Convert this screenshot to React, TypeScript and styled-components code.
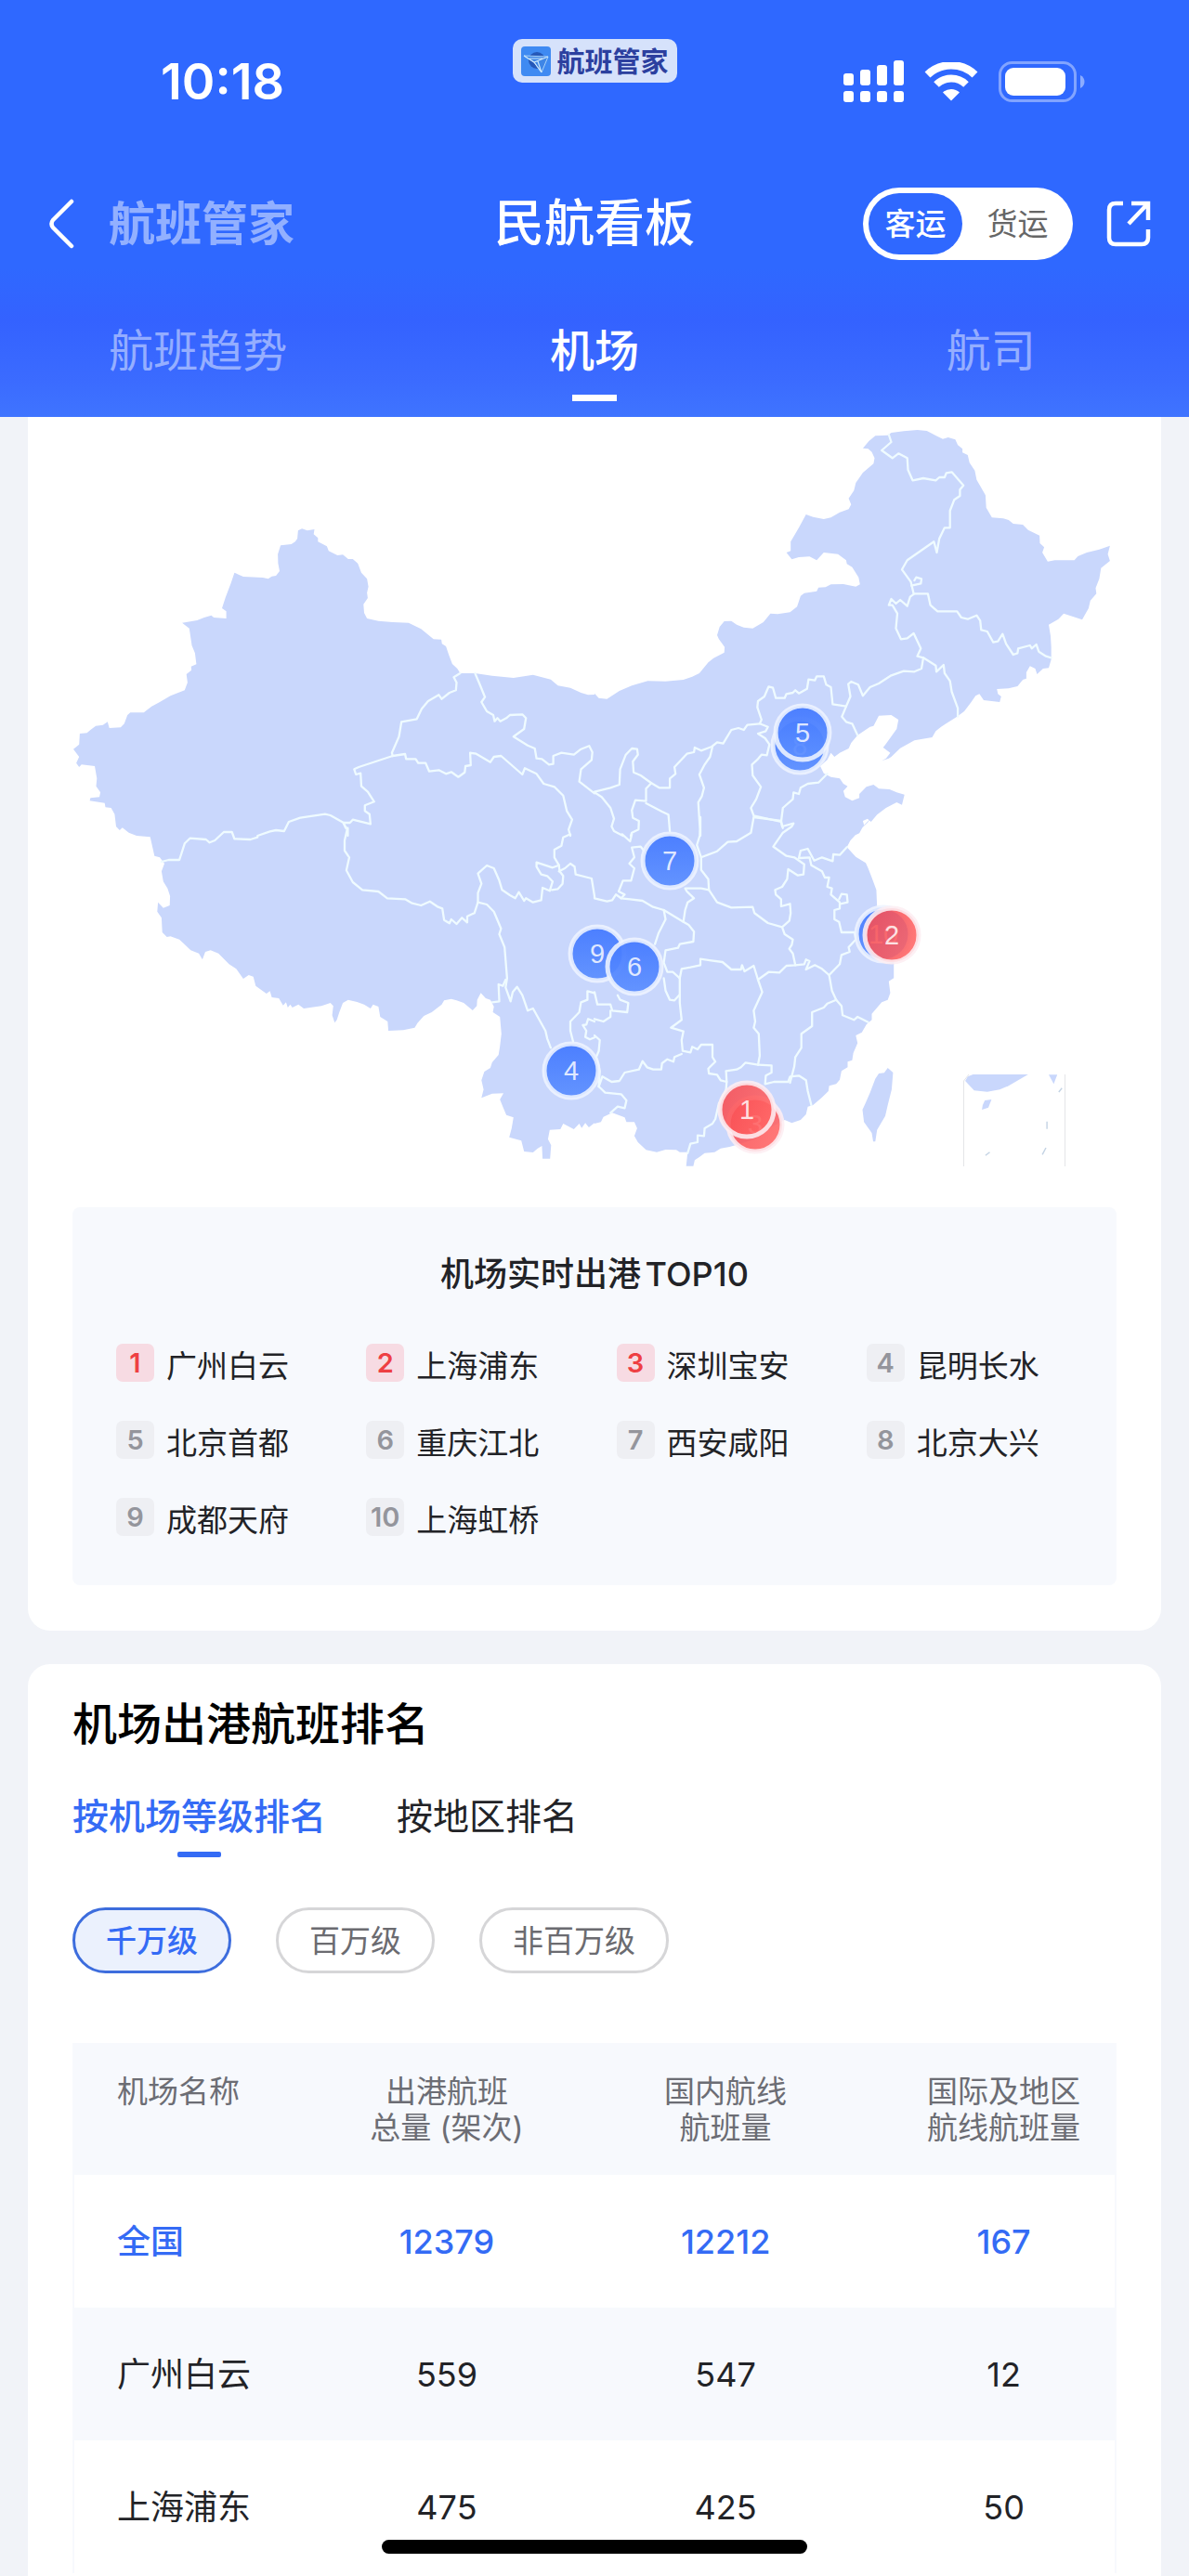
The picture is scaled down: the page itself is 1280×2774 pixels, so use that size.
import React, { useState } from 'react';
import styled, { createGlobalStyle } from 'styled-components';

const GlobalStyle = createGlobalStyle`
  *, *::before, *::after { box-sizing: border-box; }
  body {
    margin: 0;
    background: #f1f3f8;
    color: #222327;
    font-family: Inter, "Noto Sans CJK SC", sans-serif;
    text-autospace: normal;
  }
  button { font: inherit; color: inherit; background: none; border: 0; padding: 0; cursor: pointer; }
  h1, h2, h3, ol { margin: 0; padding: 0; }
`;

/* ---------- shell ---------- */

const Screen = styled.div`
  display: flex;
  flex-direction: column;
  height: 100vh;
  overflow: hidden;
`;

const Header = styled.header`
  flex: none;
  color: #fff;
  background: linear-gradient(#2f68ff 0, #2f68ff 290px, #3462ff 345px, #3b6bff 410px, #3f74ff 100%);
`;

const StatusBar = styled.div`
  display: grid;
  grid-template-columns: 1fr auto 1fr;
  align-items: center;
  height: 134px;
  padding: 42px 112px 0;
`;

const Clock = styled.time`
  padding-left: 61px;
  font-size: 54px;
  font-weight: 600;
  line-height: 64px;
`;

const BrandChip = styled.div`
  align-self: start;
  display: flex;
  align-items: center;
  gap: 7px;
  height: 47px;
  padding: 0 9px;
  border-radius: 10px;
  background: #d6e2fb;
  color: #2c409f;
  font-size: 30px;
  font-weight: 700;
  line-height: 40px;
`;

const StatusIcons = styled.div`
  display: flex;
  align-items: center;
  justify-content: flex-end;
  gap: 22px;
`;

const NavBar = styled.nav`
  display: grid;
  grid-template-columns: 1fr auto 1fr;
  align-items: center;
  height: 78px;
  margin-top: 68px;
  padding: 0 41px;
`;

const NavSide = styled.div<{ $end?: boolean }>`
  display: flex;
  align-items: center;
  justify-content: ${(p) => (p.$end ? 'flex-end' : 'flex-start')};
  gap: 36px;
`;

const IconButton = styled.button`
  display: flex;
`;

const BackButton = styled(IconButton)`
  padding-left: 12px;
`;

const BrandWord = styled.span`
  font-size: 50px;
  font-weight: 700;
  line-height: 72px;
  color: rgba(255, 255, 255, 0.48);
`;

const Title = styled.h1`
  font-size: 54px;
  font-weight: 500;
  line-height: 76px;
`;

const Segmented = styled.div`
  display: flex;
  height: 78px;
  padding: 6px 0 6px 6px;
  border-radius: 39px;
  background: #fff;
`;

const Segment = styled.button<{ $active: boolean }>`
  width: ${(p) => (p.$active ? '101px' : '119px')};
  border-radius: 33px;
  font-size: 33px;
  font-weight: ${(p) => (p.$active ? 500 : 400)};
  line-height: 48px;
  color: ${(p) => (p.$active ? '#fff' : '#666')};
  background: ${(p) => (p.$active ? '#2f68ff' : 'transparent')};
`;

const MainTabs = styled.div`
  display: grid;
  grid-template-columns: repeat(3, 1fr);
  margin-top: 64px;
`;

const MainTab = styled.button<{ $active: boolean }>`
  display: flex;
  flex-direction: column;
  align-items: center;
  padding-bottom: 17px;
  font-size: 48px;
  font-weight: ${(p) => (p.$active ? 500 : 400)};
  line-height: 68px;
  color: ${(p) => (p.$active ? '#fff' : 'rgba(255, 255, 255, 0.48)')};

  &::after {
    content: '';
    width: 48px;
    height: 7px;
    margin-top: 13px;
    background: ${(p) => (p.$active ? '#fff' : 'transparent')};
  }
`;

const Content = styled.main`
  flex: 1;
  min-height: 0;
  overflow-y: auto;
  scrollbar-width: none;
  padding: 0 30px;
`;

const HomeIndicator = styled.div`
  position: fixed;
  left: 50%;
  bottom: 24px;
  width: 458px;
  height: 15px;
  margin-left: -229px;
  border-radius: 8px;
  background: #000;
`;

/* ---------- map card ---------- */

const MapCard = styled.section`
  padding-bottom: 49px;
  border-radius: 0 0 24px 24px;
  background: #fff;
`;

const MapSvg = styled.svg`
  display: block;
  width: 100%;
  height: auto;
`;

const TopPanel = styled.div`
  margin: 44px 48px 0;
  padding: 47px 0 53px 47px;
  border-radius: 8px;
  background: #f7f9fd;
`;

const TopTitle = styled.h2`
  padding-right: 47px;
  text-align: center;
  font-size: 36px;
  font-weight: 500;
  line-height: 50px;
`;

const TopList = styled.ol`
  display: grid;
  grid-template-columns: repeat(4, 1fr);
  row-gap: 42px;
  margin-top: 50px;
  list-style: none;
`;

const TopItem = styled.li`
  display: flex;
  align-items: flex-start;
  gap: 13px;
  height: 41px;
  font-size: 33px;
  line-height: 48px;
  white-space: nowrap;
`;

const Rank = styled.span<{ $hot: boolean }>`
  flex: none;
  width: 41px;
  height: 41px;
  border-radius: 7px;
  text-align: center;
  font-size: 29px;
  font-weight: 600;
  line-height: 41px;
  color: ${(p) => (p.$hot ? '#ee3f43' : '#94959c')};
  background: ${(p) => (p.$hot ? '#f7dbe3' : '#eeeff3')};
`;

/* ---------- ranking card ---------- */

const RankCard = styled.section`
  margin-top: 36px;
  padding: 32px 48px 48px;
  border-radius: 24px;
  background: #fff;
`;

const RankTitle = styled.h2`
  font-size: 48px;
  font-weight: 500;
  line-height: 66px;
  color: #000;
`;

const SubTabs = styled.div`
  display: flex;
  gap: 76px;
  margin-top: 38px;
`;

const SubTab = styled.button<{ $active: boolean }>`
  display: flex;
  flex-direction: column;
  align-items: center;
  font-size: 39px;
  font-weight: ${(p) => (p.$active ? 500 : 400)};
  line-height: 55px;
  color: ${(p) => (p.$active ? '#346bf5' : '#222327')};

  &::after {
    content: '';
    width: 47px;
    height: 6px;
    margin-top: 11px;
    border-radius: 2px;
    background: ${(p) => (p.$active ? '#346bf5' : 'transparent')};
  }
`;

const Pills = styled.div`
  display: flex;
  gap: 48px;
  margin-top: 54px;
`;

const Pill = styled.button<{ $active: boolean }>`
  height: 71px;
  padding: 0 33px;
  border: 3px solid ${(p) => (p.$active ? '#3d6ddd' : '#d6d6d8')};
  border-radius: 36px;
  font-size: 33px;
  line-height: 48px;
  font-weight: ${(p) => (p.$active ? 500 : 400)};
  color: ${(p) => (p.$active ? '#346bf5' : '#6b6b70')};
  background: ${(p) => (p.$active ? '#ebf1fd' : '#fff')};
`;

const Table = styled.table`
  width: 100%;
  margin-top: 75px;
  table-layout: fixed;
  border-spacing: 0;
  border: 2px solid #f7f9fd;
  border-width: 0 2px;
  font-size: 36px;
`;

const Col = styled.col<{ $share: number }>`
  width: ${(p) => p.$share}%;
`;

const Th = styled.th`
  height: 142px;
  padding: 33px 0 0;
  vertical-align: top;
  font-size: 33px;
  font-weight: 400;
  line-height: 39px;
  color: #6c6d74;
  background: #f7f9fd;

  &:first-child { padding-left: 46px; text-align: left; }
  &:last-child { padding-left: 30px; }
`;

const Row = styled.tr<{ $total?: boolean }>`
  color: ${(p) => (p.$total ? '#346bf5' : '#222327')};
  font-weight: ${(p) => (p.$total ? 500 : 400)};

  &:nth-child(even) { background: #f7f9fd; }
`;

const Td = styled.td`
  height: 143px;
  padding: 0;
  text-align: center;
  line-height: 52px;

  &:first-child { padding-left: 46px; text-align: left; }
  &:last-child { padding-left: 30px; }
`;

/* ---------- map data ---------- */

/* The map is digitised in four tiles; each has its own origin and a shared grid step. */
type Tile = 'nw' | 'ne' | 'sw' | 'se';
const TILE_ORIGIN: Record<Tile, [number, number]> = {
  nw: [40, 440],
  ne: [640, 440],
  sw: [40, 880],
  se: [640, 880],
};
const STEP_X = 2.6133;
const STEP_Y = 3;

const toPath = (spec: string) => {
  let tile: Tile = 'nw';
  const out: string[] = [];
  spec.trim().split(/\s+/).forEach((token) => {
    if (token in TILE_ORIGIN) {
      tile = token as Tile;
      return;
    }
    const [x, y] = token.split(',').map(Number);
    const [ox, oy] = TILE_ORIGIN[tile];
    out.push(`${(ox + x / STEP_X).toFixed(1)} ${(oy + y / STEP_Y).toFixed(1)}`);
  });
  return `M${out.join('L')}`;
};

const MAINLAND = `
nw 102,1100 118,1085 120,1050 140,1048 150,1038 165,1025 185,1022 198,1012 203,1032 235,1030 245,1018 254,990 262,982 300,982 322,962
345,948 375,928 415,910 423,885 420,858 434,845 433,833 448,826 444,790 435,765 428,710 408,692 450,684 470,675 490,668 497,675 532,678 532,655
520,645 530,610 545,565 555,530 580,543 635,546 650,550 660,542 672,540 682,525 678,500 677,470 685,442 715,438 726,430 732,420 734,394 745,388 760,394 780,390 778,406 790,418
790,430 815,445 820,460 845,474 860,472 875,486 888,486 902,500 912,530 928,550 932,575 928,595 930,612 918,632 920,660 928,678 960,686 1000,690 1045,692 1080,712 1115,745 1137,746
1139,760 1150,768 1158,795 1168,825 1182,840 1190,855 1232,855 1280,863 1340,870 1395,860 1445,875 1465,895 1500,902 1530,918 1550,925 1568,924
ne 0,920 12,935 35,938 70,912 105,895 150,880 200,881 250,876 275,866 295,855 320,820 335,806 365,788 366,770 350,745 345,732 352,705 365,687 385,686 400,698 420,707 445,710
475,690 495,662 515,664 550,658 570,640 580,605 590,596 625,590 630,578 650,577 665,568 700,567 735,575 747,568 743,545 725,512 710,502 708,490 685,470 645,465 625,490 605,478 575,480
555,487 540,465 552,460 552,430 575,385 595,342 615,350 645,357 665,352 690,335 715,325 722,310 715,290 730,265 735,240 755,207 785,178 788,160 780,140 770,130 755,128 772,105 790,88
825,86 835,78 870,73 908,69 935,72 965,90 980,98 995,93 1015,100 1022,118 1035,130 1035,142 1050,150 1055,175 1070,200 1075,230 1085,250 1100,280 1102,320 1118,352
1150,355 1165,360 1178,372 1205,375 1220,392 1252,410 1253,435 1265,448 1260,465 1275,494 1295,490 1350,490 1360,477 1385,465 1420,455 1450,443 1444,470 1450,492 1425,515 1420,550
1410,580 1412,598 1395,620 1390,645 1372,682 1320,662 1305,680 1278,698 1283,735 1285,770 1285,810 1278,838 1262,840 1245,858 1240,840 1225,832 1215,852 1215,872 1205,876 1190,897 1165,904
1132,906 1135,922 1144,930 1140,948 1095,942 1083,922 1072,928 1060,948 1040,978 1020,995 975,1028 960,1042 950,1062 900,1072 860,1097 835,1125 828,1130 808,1138 820,1130 832,1112 812,1095 820,1083
850,1035 855,1005 835,990 800,992 785,1025 775,1028 740,1055 722,1080 715,1098 690,1112 675,1125 665,1112 655,1135 635,1155 645,1178 665,1190 690,1195 700,1212 712,1220 700,1235 705,1255 725,1267 745,1258
745,1245 765,1222 785,1215 800,1228 830,1230 850,1240 872,1247 865,1280 850,1272 820,1290 795,1312 778,1335 768,1325 755,1332 758,1345 745,1372 730,1380
se 780,0 768,18 752,35 720,75 710,97 735,128 763,148 770,165 780,195 793,235 795,290 840,315 865,350 850,400 842,478 842,520 828,530 832,568 825,590 808,598 780,635 780,655 765,670 752,695
735,705 740,730 728,762 725,785 712,790 712,808 695,820 690,848 680,862 660,868 658,885 640,905 615,930 600,935 595,960 580,978 555,988 535,978 500,1000 450,1040
410,1055 380,1065 355,1070 338,1082 310,1085 295,1098 282,1108 278,1127 258,1127 262,1082 240,1082 230,1075 200,1074 175,1082 145,1075 122,1050 112,1030 120,1005 112,985 90,985 85,970 50,955 25,968 18,985 0,990
sw 1568,988 1552,1002 1542,988 1532,1004 1525,990 1510,1008 1480,990 1472,1008 1442,1010 1437,1040 1446,1060 1443,1103 1422,1103 1420,1062 1408,1070 1395,1083 1370,1080 1362,1045 1328,1034 1335,1005 1340,970 1320,962 1310,935 1302,912 1312,892 1280,893 1250,907
1256,880 1250,850 1258,822 1275,810 1280,792 1298,768 1302,740 1306,700 1302,645 1282,630 1285,612 1275,590 1262,585 1248,568 1238,590 1237,610 1225,624 1200,600 1180,592 1165,587 1145,592 1138,605 1110,630 1088,642 1070,665 1062,680 1030,688 988,690 986,660
965,645 960,612 945,605 938,618 920,605 900,597 875,590 860,600 850,630 843,655 837,664 830,640 833,610 825,600 800,610 750,618 735,605 718,615 712,605 705,615 700,598 692,608 680,585 660,582 655,562 645,570 615,545
608,515 595,510 580,522 560,490 540,475 510,440 488,430 473,435 465,460 455,440 432,430 412,408 400,395 375,385 365,387 352,372 350,325 338,305 340,275 355,293 373,285 374,255 367,230 355,208 350,175 358,150 345,130 330,125 325,100 318,64 280,60 258,50 240,34 232,42 220,28
nw 222,1350 218,1310 208,1290 192,1288 190,1274 148,1267 150,1258 175,1255 178,1240 166,1220 168,1195 162,1155 125,1150 118,1158 110,1145 118,1125`;

const TAIWAN = 'se 825,810 840,825 836,880 825,930 818,965 795,1010 790,1048 784,1048 780,1020 758,985 754,945 762,925 775,890 790,845 800,828 815,826';

const BORDERS = [
  'nw 1190,855 1172,868 1180,885 1178,910 1160,918 1138,938 1130,925 1100,945 1082,970 1068,1003 1025,1012 1018,1060 998,1112 1000,1122',
  'nw 1232,855 1245,890 1260,932 1250,948 1265,978 1283,990 1287,1010 1295,1000 1303,1010 1320,1000 1330,990 1365,988 1375,1000 1370,1035 1340,1060 1380,1088 1400,1098 1405,1130 1420,1132 1440,1150 1452,1148 1452,1122 1475,1112 1510,1118 1530,1100 1553,1090 1562,1110 1560,1135 1530,1165 1525,1205 1568,1243 ne 0,1240 20,1255 45,1290 55,1325 48,1350 55,1365 80,1380 se 78,55 100,78 105,55',
  'nw 1000,1122 905,1158 892,1165 897,1182 910,1178 912,1220 930,1238 948,1270 922,1282 922,1300 935,1310 938,1342 888,1328 880,1338 862,1338 825,1314 810,1310 740,1322 708,1335 695,1365 672,1362 655,1366 620,1380 sw 620,65 600,72 555,70 548,48 525,48 500,75 485,82 475,72 430,68 415,85 400,138 370,138 350,144',
  'nw 1000,1122 1035,1116 1038,1132 1065,1132 1072,1145 1093,1145 1103,1172 1130,1168 1150,1180 1165,1174 1185,1190 1203,1175 1205,1155 1220,1152 1218,1112 1235,1115 1275,1142 1285,1125 1305,1122 1365,1182 1372,1162 1405,1180 1425,1212 1455,1222 1480,1250 1490,1300 1505,1328 1495,1360 1500,1380 sw 1500,55 1480,65 1475,92 1455,105 1455,130 1468,155 1450,163 1405,146 1405,160 1418,185 1435,190 1450,208 1442,238 1422,228 1418,268 1395,275 1375,262 1370,270 1355,242 1345,262 1330,252 1308,235 1300,205 1285,165 1265,156 1240,182 1250,215 1240,245 1240,275 1230,310 1210,320 1210,340 1195,325 1180,345 1165,330 1160,343 1145,332 1140,295 1128,290 1105,272 1080,285 1055,278 1035,265 985,262 960,240 915,235 888,210 870,172 878,130 865,108 865,75 872,40 862,20',
  'nw 862,1338 868,1355 874,1355 874,1380',
  'sw 1240,275 1265,282 1285,305 1305,360 1300,378 1315,420 1322,520 1318,550 1332,595 1338,565 1350,548 1365,575 1380,625 1395,618 1430,690 1435,715 1445,745',
  'sw 1318,525 1310,545 1298,540 1300,595 1280,598',
  'sw 1468,155 1470,175 1480,190 1478,215 1465,232 1448,235',
  'sw 1468,175 1485,165 1500,150 1512,160 1515,185 1560,198 1568,255 se 0,262 35,272 50,268 60,250 75,262 100,265 135,270 165,290 195,300 200,330 180,375 170,410',
  'se 195,300 250,338 265,348 280,370 278,402 240,410 235,422 200,430 195,470 205,500 220,500 240,520',
  'se 75,262 85,250 68,240 80,205 103,205 112,165 98,150 112,130 105,98 130,95 142,112',
  'ne 0,1238 45,1225 70,1215 72,1165 88,1118 105,1098 120,1100 122,1118 108,1140 110,1175 130,1185 160,1210 145,1228 145,1268 115,1265 105,1298 108,1322 125,1332 124,1360 105,1370 102,1380',
  'ne 145,1275 190,1302 208,1312 212,1365',
  'ne 160,1210 182,1225 212,1225 212,1195 228,1180 225,1158 260,1115 280,1110 282,1095 300,1105 330,1092 345,1078 362,1082 385,1038 405,1032 420,1038 430,1022 465,1018 488,1028 482,1042 460,1050 480,1065 492,1085 485,1120 470,1118 460,1132 443,1150 445,1185 468,1222 455,1262 440,1290 448,1315 525,1335 530,1355',
  'ne 332,1092 325,1125 310,1150 295,1182 308,1225 302,1252 292,1272 298,1380 se 298,0 296,60 288,90 300,130 345,110 375,80 400,78 440,50 448,0 500,8 525,12 528,30 560,20 555,30 530,50 503,95 540,125 562,130 590,152 588,185 572,188 545,168 542,200 528,225 508,235 510,250 525,265 525,288 550,280 552,310 548,335 528,355',
  'ne 465,1018 470,1005 458,965 460,945 478,930 490,898 502,902 510,935 535,935 540,922 558,918 565,910 575,920 598,905 602,875 620,878 625,865 645,865 652,892 665,900 670,955 708,962 696,995 708,1012 725,1018 740,1055',
  'ne 708,962 720,930 714,890 722,882 742,892 755,928 775,900 800,888 835,862 870,848 900,850 920,840 925,805 908,800 918,775 898,726 880,742 862,745 848,710 852,662 838,635 828,635 835,615 848,630 860,618 880,638 888,608 900,598 938,598 945,635 965,655 1020,655 1032,675 1050,680 1075,668 1085,685 1088,715 1105,720 1122,755 1135,752 1148,728 1158,760 1178,795 1190,790 1192,775 1225,765 1230,775 1243,762 1250,785 1270,800 1285,805',
  'ne 898,598 890,560 865,520 880,490 955,430 963,465 970,420 985,385 1000,385 1000,330 1012,295 1028,282 1028,262 1038,248 1005,205 990,208 985,222 970,222 960,232 925,225 895,232 882,198 880,160 855,145 838,160 808,135 835,108 828,84',
  'ne 892,572 918,565 920,550 905,545 900,555',
  'ne 925,805 960,830 962,850 982,828 985,855 1000,880 1005,915 1022,968 1022,995',
  'ne 525,1335 530,1290 558,1262 560,1240 575,1245 580,1225 600,1212 630,1208 655,1180',
  'se 575,132 580,108 600,102 618,140 640,130 670,142 672,120 690,122 710,97',
  'se 578,132 605,130 610,155 640,175 648,195 660,195 655,225 668,230 665,250 690,275 690,295 675,300 675,330 688,338 695,372 732,372 735,395 715,420 718,435 695,445 690,475 660,510 668,560 680,590 695,610 698,640 730,655 740,645 770,662',
  'se 688,265 695,248 710,250 712,275 692,280',
  'se 300,130 300,170 320,200 322,235 345,275 385,292 445,290 450,310 488,342 528,355 535,378 558,395 555,412 548,425 558,440 565,478',
  'se 322,235 300,230 255,230 260,240 280,262 262,275 255,300 250,338',
  'se 240,520 245,490 270,485 298,478 298,458 360,468 385,492 412,492 415,478 422,498 448,480 460,525 490,500 520,502 540,480 565,478 590,475 595,460 605,465 595,492 620,478 640,490 660,510',
  'se 460,525 472,565 448,625 452,660 448,680 462,700 465,770 460,800 425,793 412,808 400,815 370,820 372,855 355,850 345,832 322,828 320,812 340,790 332,775 332,735 300,735 290,750 275,742 270,760 248,755 245,720 250,692 215,680 245,655 240,600 240,520',
  'se 195,520 200,560 212,590 225,592 238,575',
  'se 680,590 655,602 645,615 612,630 612,675 582,700 582,745 565,775 562,805 550,858',
  'se 460,800 498,802 498,825 482,835 480,862 505,855 545,855 550,838 575,835 595,850 600,885 610,930',
  'se 245,765 225,775 222,790 205,782 190,795 188,815 165,815 148,808 135,788 125,815 85,825 70,852 48,855 22,838 12,870',
  'se 12,870 30,890 75,895 90,915 85,940 65,935 45,955',
  'se 372,855 370,880 350,925 340,975 332,990 310,1005 308,1030 290,1028 290,1050 270,1055 262,1085',
  'sw 1508,725 1500,690 1500,660 1525,630 1530,598 1548,590 1548,562 1568,568',
  'sw 1568,660 1550,652 1545,670 1535,672 1545,690 1542,710 1555,718 1568,712',
  'se 0,565 8,605 45,605 50,625 92,630 95,600 72,590 65,575',
  'se 45,625 45,645 25,660 0,652',
  'se 0,705 15,720 12,755 5,775 15,820 12,870',
].map(toPath);

const ISLANDS = [
  'se 1043,852 1050,838 1065,831 1220,831 1165,868 1140,880 1105,887 1068,883',
  'se 1278,832 1302,832 1292,862',
  'se 1098,915 1117,912 1108,938 1090,945 1092,930',
].map(toPath);

const ISLETS = [
  'se 1273,983 1273,1007',
  'se 1315,875 1306,888',
  'se 1270,1068 1260,1090',
  'se 1112,1082 1100,1093',
].map(toPath);

interface PinData { rank: number; x: number; y: number }

/* Later pins are painted over earlier ones. */
const PINS: PinData[] = [
  { rank: 10, x: 951, y: 1006 },
  { rank: 9, x: 643, y: 1027 },
  { rank: 8, x: 861, y: 803 },
  { rank: 7, x: 721, y: 927 },
  { rank: 6, x: 683, y: 1041 },
  { rank: 5, x: 864, y: 789 },
  { rank: 4, x: 615, y: 1153 },
  { rank: 3, x: 813, y: 1211 },
  { rank: 2, x: 960, y: 1007 },
  { rank: 1, x: 804, y: 1195 },
];

const Pin = ({ rank, x, y }: PinData) => (
  <g transform={`translate(${x} ${y})`}>
    <circle r="29" fill={rank <= 3 ? 'url(#hotPin)' : 'url(#coolPin)'} stroke={rank <= 3 ? '#fdeef2' : '#eef4ff'} strokeOpacity="0.88" strokeWidth="5" />
    <text y="10" textAnchor="middle" fontFamily="Liberation Sans, Arial, sans-serif" fontSize="29" fill="#fff" fillOpacity="0.82">{rank}</text>
  </g>
);

const ChinaMap = () => (
  <MapSvg viewBox="30 449 1220 807" role="img" aria-label="机场实时出港地图">
    <defs>
      <linearGradient id="coolPin" x1="0" y1="0" x2="0" y2="1">
        <stop offset="0" stopColor="#457aff" stopOpacity="0.95" />
        <stop offset="1" stopColor="#5c8fff" stopOpacity="0.93" />
      </linearGradient>
      <linearGradient id="hotPin" x1="0" y1="0" x2="1" y2="0.4">
        <stop offset="0" stopColor="#f8494f" stopOpacity="0.88" />
        <stop offset="1" stopColor="#ff6464" stopOpacity="0.88" />
      </linearGradient>
    </defs>
    <g fill="#c9d7fc">
      <path d={`${toPath(MAINLAND)}Z`} />
      <path d={`${toPath(TAIWAN)}Z`} />
      {ISLANDS.map((d) => <path key={d} d={`${d}Z`} />)}
    </g>
    <g fill="none" stroke="#effbff" strokeWidth="2.3" strokeLinejoin="round" strokeLinecap="round">
      {BORDERS.map((d) => <path key={d} d={d} />)}
    </g>
    <g fill="none" stroke="#c3d3e4" strokeWidth="1.4">
      {ISLETS.map((d) => <path key={d} d={d} />)}
    </g>
    <path d="M1037.5 1256V1164L1043 1157M1146.5 1256V1157" fill="none" stroke="#e4e5e8" />
    {PINS.map((pin) => <Pin key={pin.rank} {...pin} />)}
  </MapSvg>
);

/* ---------- icons ---------- */

const BrandIcon = () => (
  <svg width="32" height="32" viewBox="0 0 32 32" aria-hidden="true">
    <rect width="32" height="32" rx="4" fill="#3f8af2" />
    <circle cx="17" cy="15" r="9" fill="#2558b8" />
    <path d="M3 10L29 11L22 28L14 17Z" fill="#3f86e6" stroke="#a9d2f8" strokeWidth="1" strokeLinejoin="round" />
    <path d="M29 11L14 17L3 10M9 13L23 13M14 17L22 28L18 16" fill="none" stroke="#c9e6fb" strokeWidth="1.2" />
  </svg>
);

const SignalIcon = () => (
  <svg width="65" height="46" viewBox="0 0 65 46" fill="#fff" aria-hidden="true">
    {[14, 10, 5, 0].map((top, i) => (
      <g key={top}>
        <rect x={i * 18} y={top} width="11" height={27 - top} rx="3" />
        <rect x={i * 18} y="33" width="11" height="12" rx="3" />
      </g>
    ))}
  </svg>
);

const WifiIcon = () => (
  <svg width="58" height="42" viewBox="0 0 58 42" aria-hidden="true">
    <path d="M3.5 13.5A37 37 0 0 1 54.5 13.5" fill="none" stroke="#fff" strokeWidth="8.5" />
    <path d="M13 24A23 23 0 0 1 45 24" fill="none" stroke="#fff" strokeWidth="8" />
    <path d="M20 32.5A13 13 0 0 1 38 32.5L29 41.5Z" fill="#fff" />
  </svg>
);

const BatteryIcon = () => (
  <svg width="93" height="44" viewBox="0 0 93 44" aria-hidden="true">
    <rect x="1.5" y="1.5" width="81" height="41" rx="13" fill="none" stroke="#fff" strokeOpacity="0.4" strokeWidth="3" />
    <rect x="7" y="7" width="65" height="30" rx="9" fill="#fff" />
    <path d="M88 15C94 18 94 26 88 29Z" fill="#fff" fillOpacity="0.45" />
  </svg>
);

const BackIcon = () => (
  <svg width="28" height="54" viewBox="0 0 28 54" aria-hidden="true">
    <path d="M24 3L4 23Q1 27 4 31L24 51" fill="none" stroke="#fff" strokeWidth="4.5" strokeLinecap="round" strokeLinejoin="round" />
  </svg>
);

const ShareIcon = () => (
  <svg width="48" height="50" viewBox="0 0 48 50" fill="none" stroke="#fff" strokeWidth="4.5" aria-hidden="true">
    <path d="M18 3H10Q3 3 3 10V40Q3 47 10 47H38Q45 47 45 40V31" />
    <path d="M27 3H45V21M44 4L24 25" />
  </svg>
);

/* ---------- content ---------- */

const MODES = ['客运', '货运'];
const MAIN_TABS = ['航班趋势', '机场', '航司'];
const TOP_AIRPORTS = ['广州白云', '上海浦东', '深圳宝安', '昆明长水', '北京首都', '重庆江北', '西安咸阳', '北京大兴', '成都天府', '上海虹桥'];
const SUB_TABS = ['按机场等级排名', '按地区排名'];
const LEVELS = ['千万级', '百万级', '非百万级'];
const COLUMNS = [['机场名称'], ['出港航班', '总量 (架次)'], ['国内航线', '航班量'], ['国际及地区', '航线航班量']];
const COLUMN_SHARES = [22.4, 26.8, 26.8, 24];
const ROWS = [
  ['全国', '12379', '12212', '167'],
  ['广州白云', '559', '547', '12'],
  ['上海浦东', '475', '425', '50'],
];

export default function App() {
  const [mode, setMode] = useState(MODES[0]);
  const [tab, setTab] = useState(MAIN_TABS[1]);
  const [subTab, setSubTab] = useState(SUB_TABS[0]);
  const [level, setLevel] = useState(LEVELS[0]);

  return (
    <Screen>
      <GlobalStyle />
      <Header>
        <StatusBar>
          <Clock>10:18</Clock>
          <BrandChip><BrandIcon />航班管家</BrandChip>
          <StatusIcons>
            <SignalIcon />
            <WifiIcon />
            <BatteryIcon />
          </StatusIcons>
        </StatusBar>
        <NavBar>
          <NavSide>
            <BackButton aria-label="返回"><BackIcon /></BackButton>
            <BrandWord>航班管家</BrandWord>
          </NavSide>
          <Title>民航看板</Title>
          <NavSide $end>
            <Segmented>
              {MODES.map((m) => (
                <Segment key={m} $active={m === mode} aria-pressed={m === mode} onClick={() => setMode(m)}>{m}</Segment>
              ))}
            </Segmented>
            <IconButton aria-label="分享"><ShareIcon /></IconButton>
          </NavSide>
        </NavBar>
        <MainTabs>
          {MAIN_TABS.map((t) => (
            <MainTab key={t} $active={t === tab} aria-pressed={t === tab} onClick={() => setTab(t)}>{t}</MainTab>
          ))}
        </MainTabs>
      </Header>

      <Content>
        <MapCard>
          <ChinaMap />
          <TopPanel>
            <TopTitle>机场实时出港TOP10</TopTitle>
            <TopList>
              {TOP_AIRPORTS.map((name, i) => (
                <TopItem key={name}><Rank $hot={i < 3}>{i + 1}</Rank>{name}</TopItem>
              ))}
            </TopList>
          </TopPanel>
        </MapCard>

        <RankCard>
          <RankTitle>机场出港航班排名</RankTitle>
          <SubTabs>
            {SUB_TABS.map((t) => (
              <SubTab key={t} $active={t === subTab} aria-pressed={t === subTab} onClick={() => setSubTab(t)}>{t}</SubTab>
            ))}
          </SubTabs>
          <Pills>
            {LEVELS.map((l) => (
              <Pill key={l} $active={l === level} aria-pressed={l === level} onClick={() => setLevel(l)}>{l}</Pill>
            ))}
          </Pills>
          <Table>
            <colgroup>
              {COLUMN_SHARES.map((share, i) => <Col key={i} $share={share} />)}
            </colgroup>
            <thead>
              <tr>
                {COLUMNS.map((lines) => (
                  <Th key={lines[0]} scope="col">
                    {lines.map((line, i) => (
                      <React.Fragment key={line}>{i > 0 && <br />}{line}</React.Fragment>
                    ))}
                  </Th>
                ))}
              </tr>
            </thead>
            <tbody>
              {ROWS.map((row, i) => (
                <Row key={row[0]} $total={i === 0}>
                  {row.map((cell, j) => <Td key={j}>{cell}</Td>)}
                </Row>
              ))}
            </tbody>
          </Table>
        </RankCard>
      </Content>
      <HomeIndicator />
    </Screen>
  );
}
